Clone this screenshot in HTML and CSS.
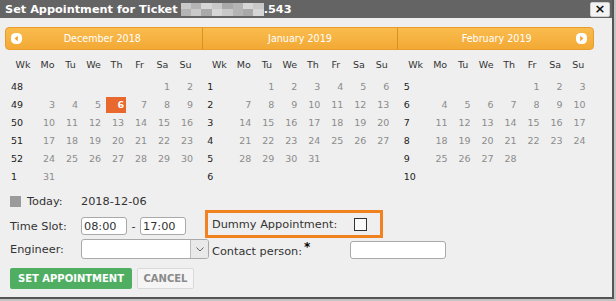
FILE: index.html
```html
<!DOCTYPE html>
<html lang="en">
<head>
    <meta charset="UTF-8">
    <title>Set Appointment</title>
    <link rel="stylesheet" href="styles.css">
</head>
<body>
    <div class="dialog">
        <div class="title-bar">
            <span class="title-text">Set Appointment for Ticket</span>
            <span class="blur">
                <i class="b1"></i><i class="b2"></i><i class="b3"></i><i class="b1"></i><i class="b4"></i><i class="b2"></i><i class="b3"></i><i class="b1"></i>
                <i class="b2"></i><i class="b1"></i><i class="b4"></i><i class="b3"></i><i class="b1"></i><i class="b2"></i><i class="b4"></i><i class="b3"></i>
            </span>
            <span class="title-text">.543</span>
            <button class="close">&times;</button>
        </div>

        <div class="calendar">
            <div class="cal-bar">
                <div class="cal-title first">
                    <svg class="nav" width="11" height="11" viewBox="0 0 11 11"><rect width="11" height="11" rx="4.5" fill="#fff"/><polygon points="6.8,2.8 6.8,8.2 3.6,5.5" fill="#f2a22c"/></svg>
                    <span>December 2018</span>
                </div>
                <div class="cal-title middle"><span>January 2019</span></div>
                <div class="cal-title last">
                    <span></span>
                    <span>February 2019</span>
                    <svg class="nav" width="11" height="11" viewBox="0 0 11 11"><rect width="11" height="11" rx="4.5" fill="#fff"/><polygon points="4.2,2.8 4.2,8.2 7.4,5.5" fill="#f2a22c"/></svg>
                </div>
            </div>

            <div class="months">
                <table class="month">
                    <thead><tr><th>Wk</th><th>Mo</th><th>Tu</th><th>We</th><th>Th</th><th>Fr</th><th>Sa</th><th>Su</th></tr></thead>
                    <tbody>
                        <tr><td class="wk">48</td><td></td><td></td><td></td><td></td><td></td><td>1</td><td>2</td></tr>
                        <tr><td class="wk">49</td><td>3</td><td>4</td><td>5</td><td class="today-cell"><span>6</span></td><td>7</td><td>8</td><td>9</td></tr>
                        <tr><td class="wk">50</td><td>10</td><td>11</td><td>12</td><td>13</td><td>14</td><td>15</td><td>16</td></tr>
                        <tr><td class="wk">51</td><td>17</td><td>18</td><td>19</td><td>20</td><td>21</td><td>22</td><td>23</td></tr>
                        <tr><td class="wk">52</td><td>24</td><td>25</td><td>26</td><td>27</td><td>28</td><td>29</td><td>30</td></tr>
                        <tr><td class="wk">1</td><td>31</td><td></td><td></td><td></td><td></td><td></td><td></td></tr>
                    </tbody>
                </table>
                <table class="month">
                    <thead><tr><th>Wk</th><th>Mo</th><th>Tu</th><th>We</th><th>Th</th><th>Fr</th><th>Sa</th><th>Su</th></tr></thead>
                    <tbody>
                        <tr><td class="wk">1</td><td></td><td>1</td><td>2</td><td>3</td><td>4</td><td>5</td><td>6</td></tr>
                        <tr><td class="wk">2</td><td>7</td><td>8</td><td>9</td><td>10</td><td>11</td><td>12</td><td>13</td></tr>
                        <tr><td class="wk">3</td><td>14</td><td>15</td><td>16</td><td>17</td><td>18</td><td>19</td><td>20</td></tr>
                        <tr><td class="wk">4</td><td>21</td><td>22</td><td>23</td><td>24</td><td>25</td><td>26</td><td>27</td></tr>
                        <tr><td class="wk">5</td><td>28</td><td>29</td><td>30</td><td>31</td><td></td><td></td><td></td></tr>
                        <tr><td class="wk">6</td><td></td><td></td><td></td><td></td><td></td><td></td><td></td></tr>
                    </tbody>
                </table>
                <table class="month">
                    <thead><tr><th>Wk</th><th>Mo</th><th>Tu</th><th>We</th><th>Th</th><th>Fr</th><th>Sa</th><th>Su</th></tr></thead>
                    <tbody>
                        <tr><td class="wk">5</td><td></td><td></td><td></td><td></td><td>1</td><td>2</td><td>3</td></tr>
                        <tr><td class="wk">6</td><td>4</td><td>5</td><td>6</td><td>7</td><td>8</td><td>9</td><td>10</td></tr>
                        <tr><td class="wk">7</td><td>11</td><td>12</td><td>13</td><td>14</td><td>15</td><td>16</td><td>17</td></tr>
                        <tr><td class="wk">8</td><td>18</td><td>19</td><td>20</td><td>21</td><td>22</td><td>23</td><td>24</td></tr>
                        <tr><td class="wk">9</td><td>25</td><td>26</td><td>27</td><td>28</td><td></td><td></td><td></td></tr>
                        <tr><td class="wk">10</td><td></td><td></td><td></td><td></td><td></td><td></td><td></td></tr>
                    </tbody>
                </table>
            </div>
        </div>

        <div class="form">
            <div class="row row-today">
                <span class="label today-label"><i class="today-mark"></i>Today:</span>
                <span>2018-12-06</span>
            </div>
            <div class="row row-time">
                <span class="label">Time Slot:</span>
                <span class="time-range">
                    <input class="field time" type="text" value="08:00">
                    <span class="dash">-</span>
                    <input class="field time" type="text" value="17:00">
                </span>
                <span class="dummy">
                    <span class="dummy-label">Dummy Appointment:</span>
                    <input class="check" type="checkbox">
                </span>
            </div>
            <div class="row row-engineer">
                <span class="label">Engineer:</span>
                <span class="select">
                    <span class="select-value"></span>
                    <span class="select-arrow"><svg width="8" height="5" viewBox="0 0 8 5"><polyline points="0.5,0.5 4,4 7.5,0.5" fill="none" stroke="#666" stroke-width="1"/></svg></span>
                </span>
                <span class="contact-label">Contact person:<span class="req">*</span></span>
                <input class="field contact" type="text">
            </div>
            <div class="row row-buttons">
                <button class="btn btn-set">SET APPOINTMENT</button>
                <button class="btn btn-cancel">CANCEL</button>
            </div>
        </div>
    </div>
</body>
</html>
```

FILE: styles.css
```css
* {
    margin: 0;
    padding: 0;
    box-sizing: border-box;
}

body {
    background-color: #c4c4c4;
    font-family: 'DejaVu Sans', Verdana, sans-serif;
    color: #333;
}

.dialog {
    width: 614px;
    height: 299px;
    background-color: #efefef;
    border-right: 2px solid #555;
    border-bottom: 2px solid #555;
}

/* barra de titulo */
.title-bar {
    height: 18px;
    background-color: #646464;
    display: flex;
    align-items: center;
    padding-left: 5px;
}

.title-text {
    color: white;
    font-size: 11.3px;
    font-weight: bold;
    white-space: pre;
}

.blur {
    display: grid;
    grid-template-columns: repeat(8, 1fr);
    width: 83px;
    height: 13px;
    margin-left: 3px;
}

.blur i { display: block; }
.blur .b1 { background: #c9c9c9; }
.blur .b2 { background: #b4b4b4; }
.blur .b3 { background: #d6d6d6; }
.blur .b4 { background: #a9a9a9; }

.close {
    margin-left: auto;
    margin-right: 2px;
    width: 20px;
    height: 15px;
    background: #f3f3f3;
    border: 1px solid #cfcfcf;
    border-radius: 2px;
    font-family: 'DejaVu Sans', sans-serif;
    font-size: 13px;
    font-weight: bold;
    line-height: 12px;
    color: #111;
}

/* calendario */
.calendar {
    margin: 9px 18px 0 5px;
}

.cal-bar {
    display: grid;
    grid-template-columns: repeat(3, 1fr);
    height: 23px;
    border: 1px solid #e99c29;
    border-radius: 4px;
    background: linear-gradient(#f9bc4e, #f3a935);
}

.cal-title {
    display: grid;
    align-items: center;
    color: white;
    font-size: 9.6px;
    text-align: center;
}

.cal-title.first {
    grid-template-columns: 11px 1fr 19px;
    padding-left: 5px;
}

.cal-title.middle {
    grid-template-columns: 1fr;
    border-left: 1px solid #d89020;
}

.cal-title.last {
    grid-template-columns: 19px 1fr 11px;
    padding-right: 6px;
    border-left: 1px solid #d89020;
}

.months {
    display: grid;
    grid-template-columns: repeat(3, 1fr);
}

.month {
    table-layout: fixed;
    border-collapse: collapse;
    width: 187px;
    margin: 4px 0 0 5px;
    font-size: 9.5px;
}

.month th {
    font-weight: normal;
    color: #333;
    height: 24px;
    line-height: 21px;
    padding-bottom: 3px;
    vertical-align: top;
    text-align: center;
    width: 23px;
}

.month th:first-child {
    width: 26px;
}

.month td {
    height: 18px;
    line-height: 16px;
    padding: 1px 4px 1px 0;
    text-align: right;
    color: #8c8c8c;
}

.month td.wk {
    text-align: left;
    padding-left: 1px;
    color: #222;
}

.month td.today-cell {
    padding: 1px 2px 1px 1px;
}

.today-cell span {
    display: block;
    height: 16px;
    padding-right: 2px;
    background: #e8682d;
    color: white;
    font-weight: bold;
}

/* formulario */
.form {
    padding-left: 10px;
    margin-top: 6px;
    font-size: 11.3px;
    color: #333;
}

.row {
    display: flex;
    align-items: center;
}

.label {
    width: 71px;
    flex-shrink: 0;
}

.row-today {
    height: 18px;
}

.today-label {
    display: flex;
    align-items: center;
    gap: 6px;
}

.today-mark {
    display: block;
    width: 11px;
    height: 11px;
    background: #9b9b9b;
}

.row-time {
    height: 22px;
    margin-top: 5px;
}

.time-range {
    display: flex;
    align-items: center;
    width: 127px;
}

.field {
    height: 18px;
    border: 1px solid #a9a9a9;
    border-radius: 3px;
    background: white;
    font-family: 'DejaVu Sans', Verdana, sans-serif;
    font-size: 11.3px;
    color: #333;
    padding-left: 2px;
    outline: none;
}

.time {
    width: 46px;
}

.dash {
    width: 13px;
    text-align: center;
}

.dummy {
    display: flex;
    align-items: center;
    width: 172px;
    height: 22px;
    margin: -2px 0 2px;
    outline: 3px solid #f0821f;
}

.dummy-label {
    width: 142px;
    padding-left: 4px;
}

.check {
    appearance: none;
    width: 13px;
    height: 13px;
    margin-left: 4px;
    border: 1px solid #333;
    background: #fafafa;
}

.row-engineer {
    height: 22px;
    margin-top: 1px;
}

.select {
    display: flex;
    width: 128px;
    height: 20px;
    border: 1px solid #a9a9a9;
    border-radius: 3px;
    background: white;
    overflow: hidden;
}

.select-value {
    flex: 1;
}

.select-arrow {
    width: 18px;
    display: flex;
    align-items: center;
    justify-content: center;
    background: #e9e9e9;
    border-left: 1px solid #bdbdbd;
}

.contact-label {
    width: 141px;
    padding-left: 3px;
}

.req {
    font-weight: bold;
    color: #000;
    font-size: 12px;
    vertical-align: 4px;
    margin-left: 2px;
}

.contact {
    width: 96px;
    margin-top: 2px;
}

.row-buttons {
    margin-top: 8px;
    gap: 5px;
}

.btn {
    height: 21px;
    border-radius: 2px;
    font-family: 'DejaVu Sans', Verdana, sans-serif;
    font-size: 10px;
    font-weight: bold;
    cursor: pointer;
}

.btn-set {
    width: 122px;
    border: none;
    background: #4fae62;
    color: white;
}

.btn-cancel {
    width: 57px;
    border: 1px solid #dadada;
    background: #f5f5f5;
    color: #8a8a8a;
}
```
